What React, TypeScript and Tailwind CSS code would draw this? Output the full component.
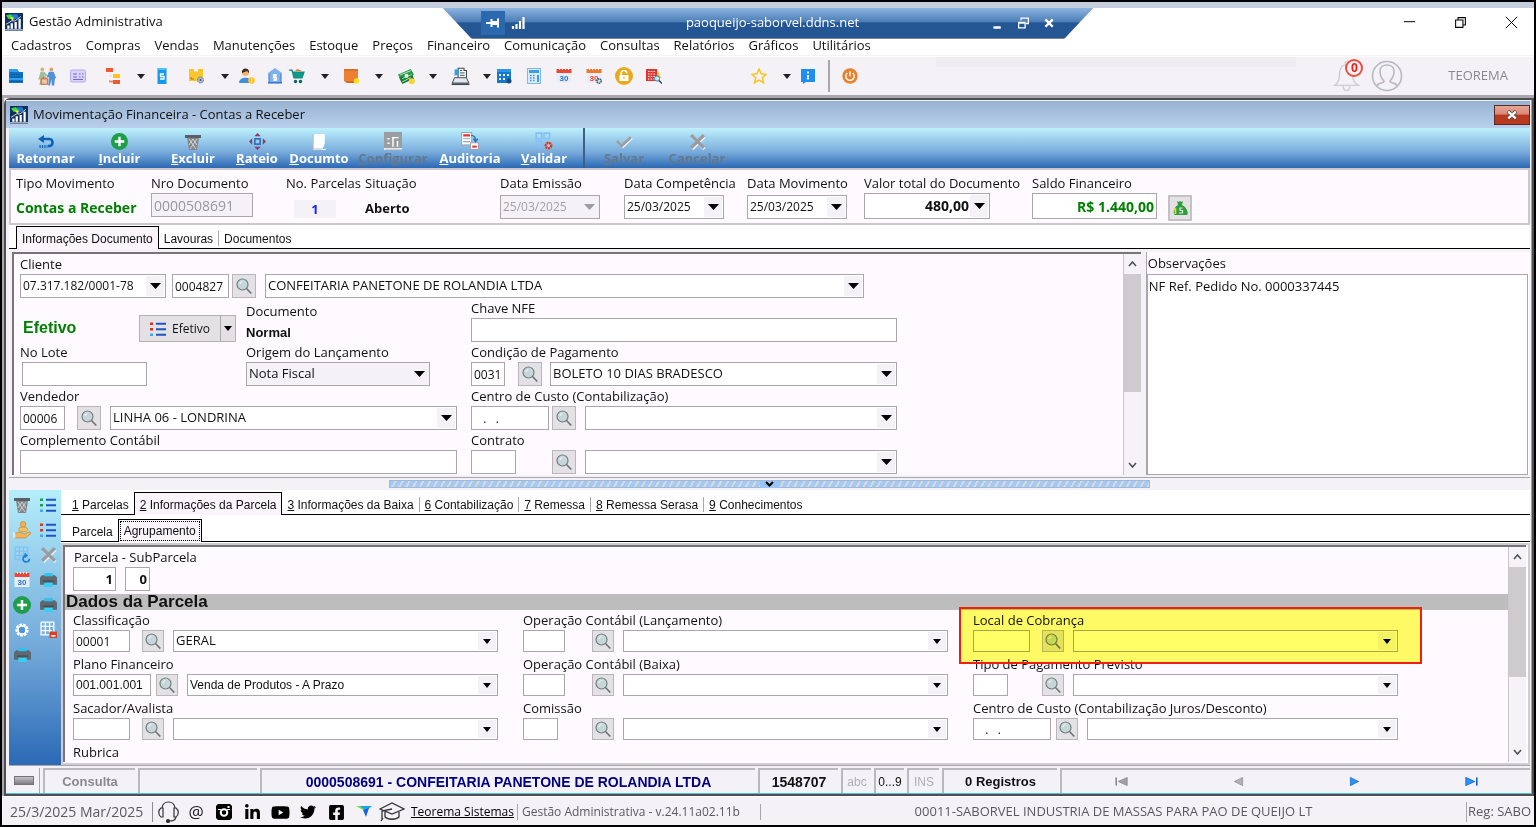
import { ReactNode, useState } from "react";
import { clsx } from "clsx";
import { FaFacebookSquare, FaLinkedinIn, FaTwitter, FaYoutube } from "react-icons/fa";

const sans = "font-['Open_Sans','Noto_Sans',sans-serif]";
const legacy = "font-['Liberation_Sans',Arial,sans-serif]";

/* ---------- icons ---------- */

const Svg = ({ size = 16, children }: { size?: number; children: ReactNode }) => (
  <svg width={size} height={size} viewBox="0 0 16 16" fill="none" className="shrink-0" aria-hidden="true">
    {children}
  </svg>
);

const Caret = ({ color = "#000", small }: { color?: string; small?: boolean }) => (
  <svg width={small ? 8 : 11} height={small ? 5 : 6} viewBox="0 0 11 6" preserveAspectRatio="none" className="shrink-0" aria-hidden="true">
    <path d="M0 0h11L5.500 6z" fill={color} />
  </svg>
);

const AppIcon = () => (
  <Svg size={18}>
    <rect width="16" height="16" fill="#12305a" />
    <path d="M1 2l4-1 3 2-2 2-3 0z" fill="#3ddc3d" />
    <path d="M6 1l5 0 1 3-4 2z" fill="#1e78e0" />
    <path d="M4 4l4 0-1 3z" fill="#f2e829" />
    <path d="M2 14V11h2v3zM5 14V9h2v5zM8.500 14V8h2v6zM12 14V5h2v9z" fill="#fff" />
    <path d="M1 10l5-3 3 0 5-4" stroke="#dfe9f5" strokeWidth=".8" />
    <path d="M0 15h16" stroke="#dfe9f5" />
  </Svg>
);

const BoxIcon = () => (
  <Svg>
    <path d="M1 1h8l2 3h4v11H1z" fill="#1272c4" />
    <path d="M1 1h8l1 3H1zM1 10h14v2H1z" fill="#2ea0ef" />
    <path d="M3 6.500h11M3 9h11M3 13.500h11" stroke="#0b4f94" strokeWidth="1.200" strokeDasharray="1.500 1" />
  </Svg>
);
const PeopleIcon = () => (
  <Svg size={19}>
    <circle cx="4.500" cy="2" r="1.600" fill="#d8b06a" />
    <circle cx="12" cy="2" r="1.600" fill="#d9a560" />
    <path d="M3 4l3 0 3 3-1 1-2-1 1 8H2l1-5-2 1z" fill="#9cc0a0" />
    <path d="M10 4h4l2 5-1 1-.5 5.500h-2l-.5-5-1 5H9.500l.5-7-2 .5z" fill="#4f92d8" />
    <rect x="3.500" y="10" width="5.500" height="4.500" fill="#f3c4a0" stroke="#c8643c" strokeWidth=".8" />
    <path d="M5 10V8.500h2.500V10" stroke="#c8643c" strokeWidth=".7" />
  </Svg>
);
const CardIcon = () => (
  <Svg>
    <rect x=".5" y="2" width="15" height="12" rx="1.500" fill="#d9d2fa" stroke="#b4abe6" />
    <path d="M3 6h4M3 9h4M9 6h1.500M12 6h1.500M9 9h1.500M12 9h1.500M3 11.500h10" stroke="#7469c4" />
  </Svg>
);
const TreeIcon = () => (
  <Svg>
    <rect x="1" y="0" width="7" height="4" fill="#f0592b" />
    <rect x="8" y="6" width="7" height="4" fill="#ffc414" />
    <rect x="8" y="12" width="7" height="4" fill="#f0592b" />
    <path d="M4 13.500h4" stroke="#e98a6a" strokeWidth="2" />
    <path d="M5 5v3h2" stroke="#f0c9bb" strokeDasharray="1 1" />
  </Svg>
);
const DocSIcon = () => (
  <Svg>
    <rect x="3.500" y="0" width="9" height="16" fill="#129be8" />
    <rect x="3.500" y="0" width="9" height="2" fill="#54c2f5" />
    <path d="M10 6H6.500v2.500H10V11H6" stroke="#fff" strokeWidth="1.300" />
  </Svg>
);
const PackageIcon = () => (
  <Svg>
    <path d="M0 1h5v3l2-1 2 1V1h5v12H0z" fill="#fbc52c" />
    <path d="M2 9v2h3" stroke="#a3761b" />
    <circle cx="11.500" cy="12" r="3" fill="#aeb9cc" stroke="#5d7397" strokeDasharray="1.500 .8" />
    <circle cx="11.500" cy="12" r="1" fill="#44597c" />
  </Svg>
);
const UserCoinIcon = () => (
  <Svg>
    <circle cx="6.500" cy="4.500" r="3.500" fill="#f6b26b" />
    <path d="M3 5c-1-6 8-6 7 0L8 3z" fill="#3a2a20" />
    <path d="M0 15c0-7 13-7 13 0z" fill="#3e8ee0" />
    <circle cx="12.500" cy="12.500" r="3.300" fill="#ffc328" />
    <path d="M12.500 10.500v4" stroke="#fff3b0" />
  </Svg>
);
const BankIcon = () => (
  <Svg>
    <path d="M1 5l7-5 7 5v1H1zM2 6h12v8h1v2H1v-2h1z" fill="#7fb1f0" />
    <path d="M2 14.500V6M14 14.500V6M1 14.500h14" stroke="#3c74c9" />
    <path d="M10 7H6.500v2.500H9.500V12H6M8 6v7" stroke="#fff" strokeWidth="1.300" />
  </Svg>
);
const CartIcon = () => (
  <Svg>
    <path d="M0 2h3l2 8h8l2-6H4" fill="#0e9b8c" stroke="#0c8a7c" strokeWidth="1.200" />
    <path d="M6 3l2-2 3 1 2 1H6z" fill="#f0762b" />
    <circle cx="6.500" cy="13.500" r="1.700" fill="#0a5e66" />
    <circle cx="11.500" cy="13.500" r="1.700" fill="#0a5e66" />
  </Svg>
);
const OrangeBoxIcon = () => (
  <Svg>
    <path d="M0 1h14v12H0z" fill="#ed8033" />
    <path d="M0 1h14v2H0z" fill="#d9722a" />
    <path d="M0 13l3 2h8v-2z" fill="#cf6a22" />
    <circle cx="12.500" cy="13" r="2.800" fill="#ffe11c" />
  </Svg>
);
const MoneyIcon = () => (
  <Svg size={17}>
    <path d="M0 6l12-5 3 5-12 6z" fill="#2e9c4b" />
    <path d="M1 9l12-4 2 5-11 5z" fill="#1a7a36" />
    <path d="M2 6.500l10-4M4 13l8-4M4 10l9-4" stroke="#b9e8c4" strokeWidth=".9" />
    <circle cx="8" cy="7.500" r="2" fill="#d3f2d8" />
    <circle cx="13" cy="12.500" r="2.800" fill="#ffd22e" />
  </Svg>
);
const RegisterIcon = () => (
  <Svg size={19}>
    <path d="M6 9V1h5v2h2v6" fill="#fff" stroke="#3d4650" strokeWidth=".9" />
    <path d="M7.500 3h2M7.500 5h4M7.500 7h4" stroke="#3d4650" strokeWidth=".8" />
    <rect x="3" y="2" width="3.500" height="5" fill="#2f9fe4" />
    <path d="M3 9h10l2 4.500H1z" fill="#e3e8ee" stroke="#3d4650" strokeWidth=".8" />
    <path d="M.5 14.500h15" stroke="#3d4650" strokeWidth="1.400" />
  </Svg>
);
const GridCalIcon = () => (
  <Svg>
    <rect x="1" y="1" width="14" height="14" fill="#1877c9" />
    <path d="M3 6h2v2H3zM7 6h2v2H7zM11 6h2v2h-2zM3 10h2v2H3zM7 10h2v2H7z" fill="#e4f2ff" />
    <path d="M1 1h14v3H1z" fill="#2c97ea" />
    <circle cx="13" cy="13" r="2.500" fill="#124c83" />
  </Svg>
);
const CalcIcon = () => (
  <Svg>
    <rect x="1.500" y=".5" width="13" height="15" fill="#d8ecfc" stroke="#7fb7e8" />
    <rect x="3" y="2" width="10" height="3" fill="#3f9be3" />
    <path d="M4 7.500h1.500M7 7.500h1.500M4 10h1.500M7 10h1.500M4 12.500h1.500M7 12.500h1.500" stroke="#3f8fd6" strokeWidth="1.300" />
    <path d="M11 7h2v7h-2z" fill="#3f9be3" />
  </Svg>
);
const Calendar30 = ({ top = "#ef4632", gear = false }: { top?: string; gear?: boolean }) => (
  <Svg>
    <rect x=".5" y="1" width="15" height="14" fill="#e7eef9" />
    <path d="M.5 1h15v4H.5z" fill={top} />
    <path d="M3.500 0v2M6.500 0v2M9.500 0v2M12.500 0v2" stroke="#fff" strokeWidth=".8" />
    <text x="8" y="13" textAnchor="middle" fontSize="8" fontWeight="bold" fill={gear ? "#ef4632" : "#2573d1"} fontFamily="Liberation Sans, sans-serif">30</text>
    {gear && <circle cx="13" cy="13" r="2.200" fill="#d6dde3" stroke="#49606e" strokeWidth="1.600" strokeDasharray="1.500 .5" />}
  </Svg>
);
const LockIcon = () => (
  <Svg size={18}>
    <circle cx="8" cy="8" r="8" fill="#eaa91b" />
    <path d="M5.500 7.500V5.500c0-3.300 5-3.300 5 0" stroke="#fff" strokeWidth="1.300" />
    <rect x="4" y="7" width="8" height="5.500" rx=".5" fill="#fff" />
    <path d="M8 8.500v2" stroke="#eaa91b" />
  </Svg>
);
const RedGridIcon = () => (
  <Svg>
    <path d="M11 1l4 9-5 0z" fill="#ffc414" />
    <rect x="0" y="1" width="11" height="12" fill="#e03631" />
    <path d="M2 3.500h8M2 6h8M2 8.500h8M2 11h8" stroke="#fff" strokeDasharray="1.500 1.200" />
    <circle cx="11" cy="10.500" r="2.600" fill="#cfe9fb" stroke="#2f86c9" />
    <path d="M13 12.500l3 3" stroke="#333" strokeWidth="1.400" />
  </Svg>
);
const StarIcon = () => (
  <Svg>
    <path d="M8 1l2.100 4.800 5 .5-3.800 3.400 1.200 5L8 12l-4.500 2.700 1.200-5L.9 6.300l5-.5z" stroke="#fdc21f" strokeWidth="1.500" />
  </Svg>
);
const InfoIcon = () => (
  <Svg>
    <path d="M1 1h14v13H6l-3 2v-2H1z" fill="#1d8ff2" />
    <path d="M8 3.500v2M8 7v4.500" stroke="#fff" strokeWidth="1.800" />
  </Svg>
);
const PowerIcon = () => (
  <Svg>
    <circle cx="8" cy="8" r="7.700" fill="#e9812c" />
    <path d="M5.300 5a4.200 4.200 0 1 0 5.400 0M8 3.300v5" stroke="#fff" strokeWidth="1.400" />
  </Svg>
);

const SearchIcon = () => (
  <Svg>
    <circle cx="6.500" cy="6.500" r="5.500" fill="#c6d6da" stroke="#71807f" strokeWidth="1.200" />
    <path d="M10.500 10.500l4.800 5" stroke="#6f7373" strokeWidth="1.600" />
    <path d="M3.800 6a3 3 0 0 1 2.500-2.400" stroke="#fff" />
  </Svg>
);

const ReturnIcon = () => (
  <Svg>
    <path d="M4 5h7.500c4 0 4 7 0 7H10" stroke="#1060b8" strokeWidth="2.600" />
    <path d="M6 1L0 5l6 4z" fill="#1060b8" />
    <path d="M1.500 12.500h8" stroke="#1060b8" strokeWidth="3" strokeDasharray="1.200 1.200" />
  </Svg>
);
const PlusIcon = ({ size = 17 }: { size?: number }) => (
  <Svg size={size}>
    <circle cx="8" cy="8" r="8" fill="#1d9e48" />
    <path d="M8 3.500v9M3.500 8h9" stroke="#fff" strokeWidth="2.200" />
  </Svg>
);
const TrashIcon = () => (
  <Svg>
    <path d="M0 1h16v3H0z" fill="#5c6064" />
    <path d="M2 4h12l-2 12H4z" fill="#84888c" />
    <path d="M4 5l7 10M8 5l4 6M12 5L5 15M8 5l-4 6" stroke="#dfe3e6" strokeWidth=".8" />
  </Svg>
);
const MoveIcon = () => (
  <Svg size={17}>
    <path d="M8 0l3 3H5zM8 16l3-3H5zM0 8l3-3v6zM16 8l-3-3v6z" fill="#8c3a66" />
    <rect x="5.500" y="5.500" width="5" height="5" stroke="#2a66b5" strokeWidth="1.400" />
  </Svg>
);
const PageIcon = () => (
  <Svg size={17}>
    <path d="M2 1h11v11l1 4H2z" fill="#fff" />
    <path d="M2 1v14h9" stroke="#b3bcc5" />
    <path d="M11 15l2-5 3 5z" fill="#7bc1ee" />
  </Svg>
);
const ConfigIcon = () => (
  <Svg size={18}>
    <rect width="16" height="16" fill="#9b9da0" />
    <path d="M3 6h2M3 10h2M7 5h6M8 5v8M12 8v5" stroke="#fff" strokeWidth="1.300" />
    <path d="M0 16V15h16" stroke="#fff" />
  </Svg>
);
const AuditIcon = () => (
  <Svg size={18}>
    <rect x=".5" y=".5" width="9" height="11" fill="#fff" stroke="#a0a6ad" />
    <path d="M2 3h6" stroke="#e83030" strokeWidth="2" />
    <path d="M2 6h6M2 8.500h6" stroke="#8fa8c0" />
    <rect x="8.500" y="9.500" width="7" height="6" fill="#fff" stroke="#a0a6ad" />
    <path d="M10 13h4" stroke="#e83030" strokeWidth="1.800" />
    <path d="M9 3c3 0 4 2 4 5M11 6l2 2.500L15 6" stroke="#2376c8" strokeWidth="1.300" />
  </Svg>
);
const ValidIcon = () => (
  <Svg size={18}>
    <path d="M1 1h5v5H1zM8 1h5v5H8zM1 8h5v5H1z" stroke="#83c0fa" strokeWidth="1.400" />
    <circle cx="12" cy="12" r="2.400" fill="#9fd0f5" stroke="#d93a20" strokeWidth="2.200" strokeDasharray="1.800 .5" />
  </Svg>
);
const CheckGray = () => (
  <Svg size={17}>
    <path d="M2.500 8.500l4 4.500L15 5" stroke="#fff" strokeWidth="2" />
    <path d="M1 7.500l4.500 4.500L14 4" stroke="#9c9ea2" strokeWidth="2.600" />
  </Svg>
);
const CrossGray = () => (
  <Svg size={17}>
    <path d="M3 3.500l11.500 11.500M14.500 3.500L3 15" stroke="#eef4fa" strokeWidth="3" />
    <path d="M2 2l12 12M14 2L2 14" stroke="#9a9ca0" strokeWidth="3.200" />
  </Svg>
);
const MoneyBagIcon = () => (
  <Svg>
    <path d="M5 1l1.500 1L8 1l1.500 1L11 1l-1 4c5 2 7 9 5 10H3C0 13 3 6 6 5z" fill="#2f9d3f" />
    <path d="M2 9h1.500v5" stroke="#ffd63a" strokeWidth="1.600" />
    <path d="M10.500 8H8v2.500h2.500V13H7" stroke="#d9f2dc" strokeWidth="1.200" />
  </Svg>
);
const ListIcon = ({ first = "#e0321e" }: { first?: string }) => (
  <Svg>
    <rect x="0" y="1.500" width="3" height="2.500" fill={first} />
    <rect x="0" y="7" width="3" height="2.500" fill={first} />
    <rect x="0" y="12.500" width="3" height="2.500" fill="#3da5ef" />
    <path d="M6 2.750h10M6 8.250h10M6 13.750h10" stroke="#1b55c4" strokeWidth="2.200" />
  </Svg>
);
const HandCoinIcon = () => (
  <Svg size={18}>
    <circle cx="9" cy="3" r="2.500" fill="#f3b04b" stroke="#c98526" strokeWidth=".6" />
    <ellipse cx="9" cy="7.500" rx="4" ry="2" fill="#f6c266" stroke="#c98526" strokeWidth=".6" />
    <path d="M1 11l5-1 4 1.500 5-2 1 1.500-5 4H1z" fill="#f2b45c" stroke="#c98526" strokeWidth=".6" />
    <path d="M0 10h2v5H0z" fill="#dbe8f3" />
  </Svg>
);
const GridRefreshIcon = () => (
  <Svg size={17}>
    <path d="M1 1h12v9M1 1v12h6M1 5h12M1 9h8M5 1v12M9 1v7" stroke="#7fbdf8" />
    <path d="M14.500 12a3 3 0 1 1-3-3M10 7l2 2-2 2" stroke="#1b7fe0" strokeWidth="1.500" />
  </Svg>
);
const PrinterIcon = () => (
  <Svg size={17}>
    <path d="M4 2h8v3H4z" fill="#2fc2f0" />
    <path d="M0 6l2-2h2v1h8V4h2l2 2v7H0z" fill="#5d6870" />
    <path d="M3 9.500h10" stroke="#39444c" />
    <path d="M4 11h8v4H4z" fill="#35d0f7" />
  </Svg>
);
const GearWhite = () => (
  <Svg size={16}>
    <circle cx="8" cy="8" r="5" stroke="#fff" strokeWidth="3.200" strokeDasharray="2.600 .8" />
    <circle cx="8" cy="8" r="4" stroke="#fff" strokeWidth="1.600" fill="#4c95dc" />
  </Svg>
);
const GridSaveIcon = () => (
  <Svg size={17}>
    <path d="M1 1h12v9M1 1v12h8M1 5h12M1 9h10M5 1v12M9 1v10" stroke="#fff" strokeWidth="1.200" />
    <rect x="9" y="10" width="7" height="6" fill="#e33b1d" />
    <path d="M10.500 14h4" stroke="#fff" strokeWidth="1.600" />
  </Svg>
);

/* ---------- building blocks ---------- */

type FieldProps = {
  label: string;
  value?: string;
  className?: string;
  disabled?: boolean;
};

function TextBox({ label, value = "", className, disabled }: FieldProps) {
  return (
    <input
      aria-label={label}
      defaultValue={value}
      disabled={disabled}
      className={clsx("block border border-[#a9a7ab] bg-white px-[2px] outline-none", className)}
    />
  );
}

function Combo({ label, value = "", className, disabled, small, right }: FieldProps & { small?: boolean; right?: boolean }) {
  return (
    <div className={clsx("relative flex min-w-0 border border-[#a9a7ab] bg-white", className)}>
      <select
        aria-label={label}
        disabled={disabled}
        className={clsx(
          "w-full min-w-0 appearance-none bg-transparent pl-[2px] pr-5 outline-none",
          right && "[text-align-last:right]"
        )}
      >
        <option>{value}</option>
      </select>
      <span className="pointer-events-none absolute inset-y-px right-px flex w-[18px] items-center justify-center bg-[#f5f2f7]">
        <Caret color={disabled ? "#9f9da0" : "#000"} small={small} />
      </span>
    </div>
  );
}

const SearchButton = ({ label, className }: { label: string; className?: string }) => (
  <button
    aria-label={`Pesquisar ${label}`}
    className={clsx("flex shrink-0 items-center justify-center border border-[#b9b6ba] bg-[#e4e1e5]", className)}
  >
    <SearchIcon />
  </button>
);

const Label = ({ children, className }: { children: ReactNode; className?: string }) => (
  <span className={clsx("block h-5 leading-5 whitespace-nowrap", className)}>{children}</span>
);

// code box + search button + description, the usual trio of the forms
function Lookup({
  label,
  code,
  text,
  box,
  slot,
  gap = "ml-[9px]",
  large,
  font,
}: {
  label: string;
  code?: string;
  text?: string;
  box: string;
  slot: string;
  gap?: string;
  large?: boolean;
  font?: string;
}) {
  const size = large ? "h-6" : "h-[22px]";
  return (
    <div>
      <Label>{label}</Label>
      <div className={clsx("flex", font)}>
        <div className={clsx("shrink-0", slot)}>
          <TextBox label={label} value={code} className={clsx("text-xs", size, box)} />
        </div>
        <SearchButton label={label} className={clsx(size, large ? "w-6" : "w-[22px]")} />
        <Combo label={`${label} descrição`} value={text} small={!large} className={clsx("flex-1", size, gap)} />
      </div>
    </div>
  );
}

function ScrollBar({ thumb }: { thumb: string }) {
  const arrow = "flex h-5 w-full items-center justify-center";
  return (
    <div className="flex w-[18px] shrink-0 flex-col border-l border-[#c9c6cb] bg-[#f6f3f8]">
      <div className={arrow}>
        <svg width="9" height="6" viewBox="0 0 9 6"><path d="M1 5l3.500-4L8 5" fill="none" stroke="#505050" strokeWidth="1.600" /></svg>
      </div>
      <div className={clsx("w-full bg-[#cdcbce]", thumb)} />
      <div className="flex-1" />
      <div className={arrow}>
        <svg width="9" height="6" viewBox="0 0 9 6"><path d="M1 1l3.500 4L8 1" fill="none" stroke="#505050" strokeWidth="1.600" /></svg>
      </div>
    </div>
  );
}

function Tabs({ items, initial, dotted, className }: { items: string[]; initial: number; dotted?: boolean; className?: string }) {
  const [active, setActive] = useState(initial);
  return (
    <div role="tablist" className={clsx("flex h-6 items-end border-b border-black bg-white text-xs", legacy, className)}>
      {items.map((item, i) => {
        const digit = /^\d/.test(item);
        return (
          <button
            key={item}
            role="tab"
            aria-selected={i === active}
            onClick={() => setActive(i)}
            className={clsx(
              "flex items-center whitespace-nowrap",
              i === active
                ? "-mb-px h-[23px] border border-b-0 border-black bg-[#f9f5fa]"
                : "mb-[2px] h-[15px] px-[5px]",
              i !== active && i !== active - 1 && i < items.length - 1 && "border-r border-[#a9a7ab]",
              i === active && (dotted ? "p-px" : "px-[5px] pt-[2px]")
            )}
          >
            <span className={clsx(dotted && i === active && "border border-dotted border-black px-[3px] leading-[18px]")}>
              {digit ? (
                <>
                  <u>{item[0]}</u>
                  {item.slice(1)}
                </>
              ) : (
                item
              )}
            </span>
          </button>
        );
      })}
    </div>
  );
}

/* ---------- main window ---------- */

function RemoteBar() {
  return (
    <div className="absolute top-[6px] left-1/2 h-[31px] w-[650px] -translate-x-1/2 bg-[#7d858f] [clip-path:polygon(0_0,100%_0,calc(100%-29px)_100%,29px_100%)]">
      <div className="flex h-[30px] items-center bg-linear-to-b from-[#8fb4df] via-[#4c7fb8] via-45% to-[#245694] to-50% text-white">
        <button aria-label="Fixar" className="ml-[38px] flex h-6 w-6 items-center justify-center bg-[#2b69ae]">
          <Svg>
            <path d="M1 8h5M6.500 4v8M13 3.500v9" stroke="#fff" strokeWidth="2" />
            <path d="M6 8h7" stroke="#fff" strokeWidth="4" />
          </Svg>
        </button>
        <span className="ml-[5px]">
          <Svg>
            <path d="M3 14v-3M6.500 14V9M10 14V6M13.500 14V2" stroke="#fff" strokeWidth="2.200" />
          </Svg>
        </span>
        <span className="flex-1 pl-7 text-center text-[13px]">paoqueijo-saborvel.ddns.net</span>
        <button aria-label="Minimizar conexão" className="w-[26px]">
          <Svg size={13}><path d="M3 13h9" stroke="#fff" strokeWidth="3" /></Svg>
        </button>
        <button aria-label="Restaurar conexão" className="w-[26px]">
          <Svg size={13}>
            <path d="M5 4V1.500h9V8h-3" stroke="#fff" strokeWidth="1.600" />
            <path d="M2 6.500h8v7H2zM2 7.500h8" stroke="#fff" strokeWidth="1.600" />
          </Svg>
        </button>
        <button aria-label="Fechar conexão" className="mr-[37px]">
          <Svg size={13}><path d="M3 3l9 9M12 3l-9 9" stroke="#fff" strokeWidth="3" /></Svg>
        </button>
      </div>
    </div>
  );
}

const menus = [
  "Cadastros", "Compras", "Vendas", "Manutenções", "Estoque", "Preços",
  "Financeiro", "Comunicação", "Consultas", "Relatórios", "Gráficos", "Utilitários",
];

const DropCaret = <Caret color="#222" small />;

const tools: { name: string; icon: ReactNode; w: string }[] = [
  { name: "Produtos", icon: <BoxIcon />, w: "w-7" },
  { name: "Pessoas", icon: <PeopleIcon />, w: "w-8" },
  { name: "Cartão", icon: <CardIcon />, w: "w-[31px]" },
  { name: "Estrutura", icon: <TreeIcon />, w: "w-10" },
  { name: "Mais estrutura", icon: DropCaret, w: "w-4" },
  { name: "Serviços", icon: <DocSIcon />, w: "w-[26px]" },
  { name: "Estoque", icon: <PackageIcon />, w: "w-[44px]" },
  { name: "Mais estoque", icon: DropCaret, w: "w-[12px]" },
  { name: "Clientes", icon: <UserCoinIcon />, w: "w-[31px]" },
  { name: "Bancos", icon: <BankIcon />, w: "w-[25px]" },
  { name: "Vendas", icon: <CartIcon />, w: "w-5" },
  { name: "Mais vendas", icon: DropCaret, w: "w-9" },
  { name: "Pedidos", icon: <OrangeBoxIcon />, w: "w-[18px]" },
  { name: "Mais pedidos", icon: DropCaret, w: "w-9" },
  { name: "Financeiro", icon: <MoneyIcon />, w: "w-[18px]" },
  { name: "Mais financeiro", icon: DropCaret, w: "w-9" },
  { name: "Caixa", icon: <RegisterIcon />, w: "w-[18px]" },
  { name: "Mais caixa", icon: DropCaret, w: "w-9" },
];

const moreTools = [
  { name: "Planilha", icon: <GridCalIcon /> },
  { name: "Calculadora", icon: <CalcIcon /> },
  { name: "Agenda", icon: <Calendar30 /> },
  { name: "Configurar agenda", icon: <Calendar30 top="#f07a2c" gear /> },
  { name: "Bloqueio", icon: <LockIcon /> },
  { name: "Consulta", icon: <RedGridIcon /> },
];

function MainToolbar() {
  return (
    <div className="flex h-[38px] items-center bg-[#f5f2f7]">
      {tools.map((t) => (
        <button key={t.name} aria-label={t.name} className={clsx("flex shrink-0 items-center justify-center", t.w)}>
          {t.icon}
        </button>
      ))}
      <div className="-ml-4 flex shrink-0 items-center">
        {moreTools.map((t) => (
          <button key={t.name} aria-label={t.name} className="flex w-[30px] justify-center">
            {t.icon}
          </button>
        ))}
      </div>
      <button aria-label="Favoritos" className="ml-[82px] shrink-0"><StarIcon /></button>
      <button aria-label="Mais favoritos" className="ml-4 shrink-0">{DropCaret}</button>
      <button aria-label="Informações" className="ml-[9px] shrink-0"><InfoIcon /></button>
      <div className="mx-3 h-[32px] w-[2px] shrink-0 bg-[#a9a7aa]" />
      <button aria-label="Sair" className="shrink-0"><PowerIcon /></button>
      <div className="mr-4 mb-[28px] ml-[78px] h-[10px] w-[360px] min-w-0 bg-[#efedf2]" />
      <div className="flex-1" />
      <button aria-label="Notificações" className="relative shrink-0">
        <svg width="32" height="34" viewBox="0 0 34 34" fill="none" stroke="#cfcdd2" strokeWidth="1.500">
          <path d="M4 27c4-3 5-6 5-11 0-7 3-11 7-11s7 4 7 11c0 5 1 8 6 11z" />
          <path d="M13 28c0 6 7 6 7 0M15 4c0-3 3-3 3 0" />
        </svg>
        <span className="absolute top-0 right-0 flex h-[18px] w-[18px] items-center justify-center rounded-full border-2 border-[#ef4d3c] bg-[#f5f2f7] text-xs font-bold text-[#f02010]">
          0
        </span>
      </button>
      <svg width="32" height="32" viewBox="0 0 32 32" fill="none" stroke="#b6b9be" strokeWidth="1.600" className="ml-2 shrink-0">
        <circle cx="16" cy="16" r="14.500" />
        <path d="M6 26c1-4 7-2 7-5-3-3-4-6-4-10 0-8 14-8 14 0 0 4-1 7-4 10 0 3 6 1 7 5" />
      </svg>
      <span className="mr-[26px] ml-[45px] text-[13px] text-[#8a888c]">TEOREMA</span>
    </div>
  );
}

function MainHeader() {
  return (
    <header className="relative bg-white">
      <div className="h-[6px] bg-[#c5cedd]" />
      <div className="flex h-7 items-center justify-between pl-[3px]">
        <div className="flex items-center gap-[6px] text-[13px]">
          <AppIcon />
          Gestão Administrativa
        </div>
        <div className="flex items-center gap-[38px] pr-4">
          <button aria-label="Minimizar">
            <Svg size={13}><path d="M1 7h14" stroke="#000" strokeWidth="1.200" /></Svg>
          </button>
          <button aria-label="Restaurar">
            <Svg size={13}>
              <path d="M2 5h9v9H2z" stroke="#000" strokeWidth="1.300" />
              <path d="M5 5V2h9v9h-3" stroke="#000" strokeWidth="1.300" />
            </Svg>
          </button>
          <button aria-label="Fechar">
            <Svg size={13}><path d="M1 1l14 14M15 1L1 15" stroke="#000" strokeWidth="1.200" /></Svg>
          </button>
        </div>
      </div>
      <RemoteBar />
      <nav className="flex h-[19px] items-center gap-[14px] pl-[9px] text-[13px]">
        {menus.map((m) => (
          <button key={m}>{m}</button>
        ))}
      </nav>
      <div className="h-[2px] border-b border-white bg-[#f5f2f7]" />
      <MainToolbar />
    </header>
  );
}

/* ---------- document window ---------- */

const actions = [
  { text: "Retornar", icon: <ReturnIcon />, w: "w-[73px]", key: false },
  { text: "Incluir", icon: <PlusIcon />, w: "w-[75px]", key: true },
  { text: "Excluir", icon: <TrashIcon />, w: "w-[72px]", key: true },
  { text: "Rateio", icon: <MoveIcon />, w: "w-[56px]", key: true },
  { text: "Documto", icon: <PageIcon />, w: "w-[68px]", key: true },
  { text: "Configurar", icon: <ConfigIcon />, w: "w-[80px]", key: true, off: true },
  { text: "Auditoria", icon: <AuditIcon />, w: "w-[74px]", key: true },
  { text: "Validar", icon: <ValidIcon />, w: "w-[74px]", key: true },
  { text: "Salvar", icon: <CheckGray />, w: "w-[80px]", key: true, off: true, sep: true },
  { text: "Cancelar", icon: <CrossGray />, w: "w-[68px]", key: false, off: true },
];

function ActionBar() {
  return (
    <div className="flex h-10 bg-linear-to-b from-[#bdf1fc] via-[#79abdb] via-60% to-[#2a69b5]">
      {actions.map((a) => (
        <button
          key={a.text}
          disabled={a.off}
          className={clsx(
            "flex shrink-0 flex-col items-center justify-end text-[13px] leading-[17px] font-bold",
            a.w,
            a.off ? "text-[#64788a]" : "text-white",
            a.sep && "ml-[2px] border-l-2 border-[#3b5f86]"
          )}
        >
          {a.icon}
          <span className="pb-px">{a.key ? <><u>{a.text[0]}</u>{a.text.slice(1)}</> : a.text}</span>
        </button>
      ))}
    </div>
  );
}

function DocumentHeader() {
  return (
    <div className="grid grid-cols-[135px_135px_79px_135px_124px_123px_117px_168px_136px_24px] border-2 border-[#cbc8cd] bg-[#fefaff] pt-[3px] pb-[2px] pl-[5px]">
      <div>
        <Label>Tipo Movimento</Label>
        <div className="pt-[5px] text-sm font-bold text-[#008000]">Contas a Receber</div>
      </div>
      <div>
        <Label>Nro Documento</Label>
        <TextBox label="Nro Documento" value="0000508691" disabled className="h-6 w-[102px] !bg-[#f5f2f7] text-sm text-[#9a989c]" />
      </div>
      <div>
        <Label>No. Parcelas</Label>
        <div className="mt-[7px] ml-2 w-[42px] bg-[#f5f2f7] text-center leading-[18px] font-bold text-[#2020ff]">1</div>
      </div>
      <div>
        <Label>Situação</Label>
        <div className="pt-[5px] text-[13px] leading-5 font-bold">Aberto</div>
      </div>
      <div>
        <Label>Data Emissão</Label>
        <Combo label="Data Emissão" value="25/03/2025" disabled className="mt-[2px] h-6 w-[100px] !bg-[#f5f2f7] text-xs text-[#a3a1a5]" />
      </div>
      <div>
        <Label>Data Competência</Label>
        <Combo label="Data Competência" value="25/03/2025" className="mt-[2px] h-6 w-[100px] text-xs" />
      </div>
      <div>
        <Label>Data Movimento</Label>
        <Combo label="Data Movimento" value="25/03/2025" className="mt-[2px] h-6 w-[100px] text-xs" />
      </div>
      <div>
        <Label>Valor total do Documento</Label>
        <Combo label="Valor total do Documento" value="480,00" right className="h-[26px] w-[126px] text-sm font-bold" />
      </div>
      <div>
        <Label>Saldo Financeiro</Label>
        <TextBox label="Saldo Financeiro" value="R$ 1.440,00" className="h-[26px] w-[125px] text-right text-sm font-bold text-[#008000]" />
      </div>
      <button aria-label="Saldo" className="mt-[22px] flex h-[26px] w-6 items-center justify-center border-2 border-[#c4c1c6] bg-[#e4e1e5]">
        <MoneyBagIcon />
      </button>
    </div>
  );
}

function DocumentForm() {
  return (
    <div className="flex-1 pb-px pl-[6px]">
      <Label>Cliente</Label>
      <div className="flex">
        <Combo label="CNPJ do cliente" value="07.317.182/0001-78" className="h-6 w-[146px] text-xs" />
        <TextBox label="Código do cliente" value="0004827" className="ml-[6px] h-6 w-[57px] text-xs" />
        <SearchButton label="cliente" className="ml-[3px] h-6 w-6" />
        <Combo label="Nome do cliente" value="CONFEITARIA PANETONE DE ROLANDIA LTDA" className="ml-[9px] h-6 w-[599px]" />
      </div>
      <div className="flex gap-[14px]">
        <div className="w-[437px]">
          <div className="flex">
            <div className="w-[226px]">
              <div className="flex h-11 items-end justify-between pr-[10px]">
                <span className={clsx("pb-[2px] pl-[3px] text-base font-bold text-[#008000]", legacy)}>Efetivo</span>
                <div className="flex h-[27px] border border-[#b3b0b5] bg-[#e4e1e5]">
                  <button className="flex items-center gap-[6px] border-r border-[#a9a7ab] px-[10px] text-xs">
                    <ListIcon />
                    Efetivo
                  </button>
                  <button aria-label="Opções de efetivo" className="flex w-[14px] items-center justify-center">
                    <Caret small />
                  </button>
                </div>
              </div>
              <Label>No Lote</Label>
              <TextBox label="No Lote" className="ml-[2px] h-6 w-[125px]" />
            </div>
            <div className="w-[184px]">
              <Label className="pt-[3px]">Documento</Label>
              <div className={clsx("h-6 pt-[6px] text-[13px] leading-[18px] font-bold", legacy)}>Normal</div>
              <Label>Origem do Lançamento</Label>
              <Combo label="Origem do Lançamento" value="Nota Fiscal" className="h-6 !bg-[#f5f2f7]" />
            </div>
          </div>
          <Lookup large label="Vendedor" code="00006" text="LINHA 06 - LONDRINA" box="w-[45px]" slot="w-[57px]" />
          <Label>Complemento Contábil</Label>
          <TextBox label="Complemento Contábil" className="h-6 w-full" />
        </div>
        <div className="w-[426px]">
          <Label>Chave NFE</Label>
          <TextBox label="Chave NFE" className="h-6 w-full" />
          <Lookup large label="Condição de Pagamento" code="0031" text="BOLETO 10 DIAS BRADESCO" box="w-[34px]" slot="w-[47px]" gap="ml-2" />
          <Lookup large label="Centro de Custo (Contabilização)" code="   .   ." box="w-[78px]" slot="w-[81px]" />
          <Lookup large label="Contrato" box="w-[45px]" slot="w-[81px]" />
        </div>
      </div>
    </div>
  );
}

const sideIcons = [
  <TrashIcon />, <ListIcon first="#1f9e4a" />,
  <HandCoinIcon />, <ListIcon />,
  <GridRefreshIcon />, <CrossGray />,
  <Calendar30 />, <PrinterIcon />,
  <PlusIcon size={18} />, <PrinterIcon />,
  <GearWhite />, <GridSaveIcon />,
  <PrinterIcon />,
];

function SideBar() {
  return (
    <div className="w-[52px] shrink-0 bg-linear-to-b from-[#b5eefb] via-[#6fa6d8] via-60% to-[#2a69b5] pt-[2px]">
      <div className="grid grid-cols-2">
        {sideIcons.map((icon, i) => (
          <button key={i} aria-label={`Ação ${i + 1}`} className="flex h-[25px] items-center justify-center">
            {icon}
          </button>
        ))}
      </div>
    </div>
  );
}

function ParcelaForm() {
  return (
    <div className="mr-[2px] flex flex-1 border-t-2 border-l-2 border-[#77757a] bg-[#fefaff]">
      <div className="min-w-0 flex-1">
        <Label className="pl-[9px]">Parcela - SubParcela</Label>
        <div className="flex gap-[9px] pb-[3px] pl-2">
          <TextBox label="Parcela" value="1" className="h-6 w-[43px] text-right font-bold" />
          <TextBox label="SubParcela" value="0" className="h-6 w-[25px] text-right font-bold" />
        </div>
        <h2 className={clsx("bg-[#bdbdbd] pl-px text-[17px] leading-4 font-bold", legacy)}>Dados da Parcela</h2>
        <div className="grid grid-cols-3 gap-x-[25px] gap-y-[2px] pr-[110px] pl-2">
          <Lookup label="Classificação" code="00001" text="GERAL" box="w-[57px]" slot="w-[69px]" />
          <Lookup label="Operação Contábil (Lançamento)" box="w-[42px]" slot="w-[69px]" />
          <div className="relative">
            <Lookup label="Local de Cobrança" box="w-[57px]" slot="w-[69px]" />
            <div className="pointer-events-none absolute -top-[3px] -right-6 -bottom-3 -left-[14px] bg-[#ffff66] mix-blend-multiply" />
            <div className="pointer-events-none absolute -top-[3px] -right-6 -bottom-3 -left-[14px] border-2 border-[#f02010]" />
          </div>
          <Lookup label="Plano Financeiro" code="001.001.001" text="Venda de Produtos - A Prazo" box="w-[78px]" slot="w-[83px]" font={clsx("text-xs", legacy)} />
          <Lookup label="Operação Contábil (Baixa)" box="w-[42px]" slot="w-[69px]" />
          <Lookup label="Tipo de Pagamento Previsto" box="w-[35px]" slot="w-[69px]" />
          <Lookup label="Sacador/Avalista" box="w-[57px]" slot="w-[69px]" />
          <Lookup label="Comissão" box="w-[35px]" slot="w-[69px]" />
          <Lookup label="Centro de Custo (Contabilização Juros/Desconto)" code="   .   ." box="w-[78px]" slot="w-[83px]" />
          <Label>Rubrica</Label>
        </div>
      </div>
      <ScrollBar thumb="h-[110px]" />
    </div>
  );
}

const cell = "flex items-center justify-center border-t-2 border-l-2 border-[#bcb9be] whitespace-nowrap";

function RecordBar() {
  return (
    <div className={clsx("flex gap-[3px] border-t border-[#a9a7ab] bg-[#f5f2f7] pt-[2px] text-[13px] font-bold", legacy)}>
      <div className="flex h-[25px] w-[31px] items-center justify-center border-r border-[#a9a7ab]">
        <div className="h-[9px] w-5 border border-[#77757a] bg-linear-to-b from-[#c5c3c7] to-[#807e83]" />
      </div>
      <div className={clsx(cell, "w-[92px] text-[#8b898d]")}>Consulta</div>
      <div className={clsx(cell, "w-[119px]")} />
      <div className={clsx(cell, "flex-1 text-sm text-[#000080]")}>0000508691 - CONFEITARIA PANETONE DE ROLANDIA LTDA</div>
      <div className={clsx(cell, "w-[80px] text-sm")}>1548707</div>
      <div className={clsx(cell, "w-[30px] text-xs font-normal text-[#b0aeb2]")}>abc</div>
      <div className={clsx(cell, "w-[30px] text-xs font-normal")}>0...9</div>
      <div className={clsx(cell, "w-8 text-xs font-normal text-[#b0aeb2]")}>INS</div>
      <div className={clsx(cell, "w-[115px]")}>0 Registros</div>
      <div className="flex w-[470px] items-center justify-around border-t-2 border-l-2 border-[#bcb9be]">
        <button aria-label="Primeiro"><Svg size={13}><path d="M1.500 3v10" stroke="#8c8a8e" strokeWidth="2" /><path d="M15 3v10L4 8z" fill="#a3a1a5" stroke="#8c8a8e" /></Svg></button>
        <button aria-label="Anterior"><Svg size={11}><path d="M14 2v12L2 8z" fill="#b3b1b5" stroke="#8c8a8e" /></Svg></button>
        <button aria-label="Próximo"><Svg size={11}><path d="M2 2v12L14 8z" fill="#2b93f2" stroke="#0f62cf" /></Svg></button>
        <button aria-label="Último"><Svg size={13}><path d="M1 3v10L12 8z" fill="#2b93f2" stroke="#0f62cf" /><path d="M14.500 3v10" stroke="#0f62cf" strokeWidth="2" /></Svg></button>
      </div>
    </div>
  );
}

function DocumentWindow() {
  return (
    <section className="flex flex-1 flex-col rounded-tl-md border-2 border-[#4f4f52] bg-[#46c4e8] pr-px pb-px">
      <div className="flex flex-1 flex-col bg-[#f5f2f7] pr-px">
        <div className="flex h-[28px] items-center justify-between border-t border-[#e8f2fb] bg-linear-to-b from-[#98b3d2] to-[#b9d0ec] pl-1">
          <h1 className="flex items-center gap-[5px] text-[13px]">
            <AppIcon />
            Movimentação Financeira - Contas a Receber
          </h1>
          <button aria-label="Fechar janela" className="flex h-5 w-[36px] items-center justify-center border border-[#5a2a24] bg-linear-to-b from-[#e5a594] via-[#d98a77] via-45% to-[#b83a1e] to-50%">
            <Svg size={12}>
              <path d="M2.500 3l11 10M13.500 3l-11 10" stroke="#5d4a48" strokeWidth="5" />
              <path d="M3 3.500l10 9M13 3.500l-10 9" stroke="#fff" strokeWidth="3" />
            </Svg>
          </button>
        </div>
        <div className="flex flex-1 flex-col pl-[3px]">
          <ActionBar />
          <DocumentHeader />
          <Tabs items={["Informações Documento", "Lavouras", "Documentos"]} initial={0} className="pl-[7px]" />
          <div className="mt-[3px] flex">
            <div className="ml-[3px] flex flex-[1129] border-t-2 border-l-2 border-[#77757a] bg-[#fefaff]">
              <DocumentForm />
              <ScrollBar thumb="h-[118px]" />
            </div>
            <div className="ml-[5px] flex flex-[384] flex-col border-l border-[#a9a7ab] bg-[#fefaff]">
              <label htmlFor="obs" className="h-[22px] pl-px leading-[23px]">Observações</label>
              <textarea
                id="obs"
                defaultValue="NF Ref. Pedido No. 0000337445"
                className="mr-[2px] flex-1 resize-none border border-[#a9a7ab] bg-white px-px py-[2px] outline-none"
              />
            </div>
          </div>
          <div className="mt-[2px] flex h-[13px] items-center justify-center border-t border-[#a9a7ab]">
            <button
              aria-label="Recolher painel"
              className="flex h-2 w-1/2 items-center justify-center border border-[#9db9dc] bg-[repeating-linear-gradient(120deg,#a3c9f6_0_4px,#dcd8d6_4px_6px)]"
            >
              <span className="flex h-[7px] w-5 items-center justify-center bg-[#9cc4f4]">
                <svg width="9" height="6" viewBox="0 0 9 6"><path d="M1 1l3.500 3.500L8 1" fill="none" stroke="#000" strokeWidth="2" /></svg>
              </span>
            </button>
          </div>
          <div className="flex flex-1">
            <SideBar />
            <div className="flex min-w-0 flex-1 flex-col bg-white pt-px">
              <Tabs
                items={["1 Parcelas", "2 Informações da Parcela", "3 Informações da Baixa", "6 Contabilização", "7 Remessa", "8 Remessa Serasa", "9 Conhecimentos"]}
                initial={1}
                className="pl-[6px]"
              />
              <Tabs items={["Parcela", "Agrupamento"]} initial={1} dotted className="mt-[3px] mb-px pl-[6px]" />
              <div className="flex flex-1 flex-col border-2 border-[#d0cdd2] pb-px">
                <ParcelaForm />
              </div>
            </div>
          </div>
          <RecordBar />
        </div>
      </div>
    </section>
  );
}

/* ---------- footer ---------- */

const social = [
  { name: "Suporte", icon: (
    <svg width="21" height="22" viewBox="0 0 21 22" fill="none" stroke="#333" strokeWidth="1.200">
      <path d="M4 7C5-1 16-1 17 7" />
      <path d="M5 7H3c-3 2-3 7 0 9h2zM16 7h2c3 2 3 7 0 9h-2z" />
      <path d="M18 16c-1 4-4 4-7 4" />
      <circle cx="10" cy="20" r="1.500" fill="#333" />
    </svg>
  ) },
  { name: "E-mail", icon: <span className="text-[17px] leading-5 text-[#222]">@</span> },
  { name: "Instagram", icon: (
    <Svg size={16}>
      <path d="M2 0h12l2 2v12l-2 2H2l-2-2V2z" fill="#000" />
      <path d="M2 5.500h3M11 5.500h3" stroke="#fff" />
      <circle cx="8" cy="8.500" r="3.300" stroke="#fff" strokeWidth="2" />
      <path d="M11.500 3h2" stroke="#fff" strokeWidth="2" />
    </Svg>
  ) },
  { name: "LinkedIn", icon: <FaLinkedinIn size={17} /> },
  { name: "YouTube", icon: <FaYoutube size={19} /> },
  { name: "Twitter", icon: <FaTwitter size={16} /> },
  { name: "Facebook", icon: <FaFacebookSquare size={17} /> },
  { name: "Site", icon: (
    <Svg>
      <path d="M0 2h6l3 5z" fill="#7ad83a" />
      <path d="M4 2h12l-6 5z" fill="#12a6f0" />
      <path d="M7 6l6-2-3 9z" fill="#1c62d8" />
    </Svg>
  ) },
  { name: "Treinamento", icon: (
    <svg width="26" height="20" viewBox="0 0 26 20" fill="none" stroke="#333" strokeWidth="1.300">
      <path d="M1 7l12-6 12 6-12 5z" />
      <path d="M6 10v5c3 3 11 3 14 0v-5" />
      <path d="M13 7L3 9v9M2 19l2-3" />
    </svg>
  ) },
];

function Footer() {
  return (
    <footer className="flex h-[29px] items-center border-t border-white bg-[#f5f2f7] pt-[2px] whitespace-nowrap text-[#5b595e]">
      <span className="w-[151px] border-r border-[#8d8b90] pl-2 text-sm">25/3/2025 Mar/2025</span>
      <div className="flex pl-px text-black">
        {social.map((s) => (
          <a key={s.name} href="#" aria-label={s.name} className="flex w-7 items-center justify-center">
            {s.icon}
          </a>
        ))}
      </div>
      <a href="#" className="pr-[3px] pl-[5px] text-xs text-black underline">Teorema Sistemas</a>
      <span className="w-[244px] border-x border-[#a9a7ab] pl-1 text-xs">Gestão Administrativa - v.24.11a02.11b</span>
      <span className="flex-1 text-center text-[13px]">00011-SABORVEL INDUSTRIA DE MASSAS PARA PAO DE QUEIJO LT</span>
      <span className="w-[68px] border-l border-[#a9a7ab] pl-px text-[13px]">Reg: SABO</span>
    </footer>
  );
}

export default function App() {
  return (
    <main className={clsx("flex min-h-screen flex-col border-2 border-black bg-[#f5f2f7] text-[13px] text-[#111]", sans)}>
      <MainHeader />
      <div className="flex flex-1 flex-col border-t-[3px] border-l-2 border-[#a9a7ab]">
        <DocumentWindow />
      </div>
      <Footer />
    </main>
  );
}
